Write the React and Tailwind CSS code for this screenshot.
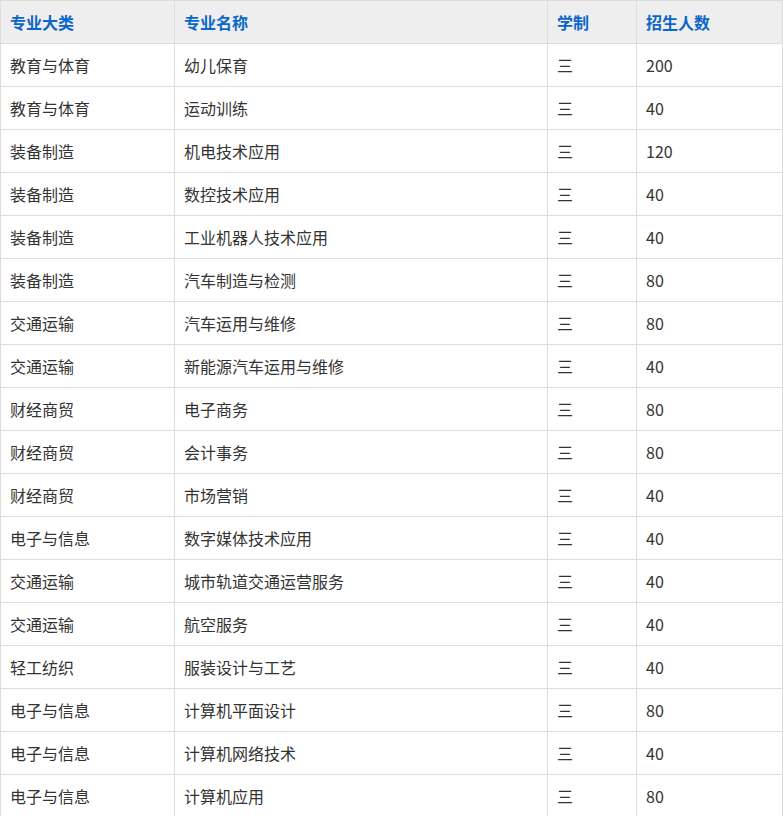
const rows = [
  ['教育与体育', '幼儿保育', '200'],
  ['教育与体育', '运动训练', '40'],
  ['装备制造', '机电技术应用', '120'],
  ['装备制造', '数控技术应用', '40'],
  ['装备制造', '工业机器人技术应用', '40'],
  ['装备制造', '汽车制造与检测', '80'],
  ['交通运输', '汽车运用与维修', '80'],
  ['交通运输', '新能源汽车运用与维修', '40'],
  ['财经商贸', '电子商务', '80'],
  ['财经商贸', '会计事务', '80'],
  ['财经商贸', '市场营销', '40'],
  ['电子与信息', '数字媒体技术应用', '40'],
  ['交通运输', '城市轨道交通运营服务', '40'],
  ['交通运输', '航空服务', '40'],
  ['轻工纺织', '服装设计与工艺', '40'],
  ['电子与信息', '计算机平面设计', '80'],
  ['电子与信息', '计算机网络技术', '40'],
  ['电子与信息', '计算机应用', '80'],
];

export default function App() {
  return (
    <div className="w-[783px] bg-white" style={{ fontFamily: '"Microsoft YaHei", "Noto Sans CJK SC", sans-serif' }}>
      <table className="w-full border-collapse text-[16px] text-[#333]">
        <colgroup>
          <col className="w-[174px]" />
          <col className="w-[373px]" />
          <col className="w-[89px]" />
          <col />
        </colgroup>
        <thead>
          <tr className="h-[43px] bg-[#eeeeee]">
            {['专业大类', '专业名称', '学制', '招生人数'].map((h) => (
              <th key={h} className="border border-[#dddddd] px-[9px] text-left font-bold text-[#0b66c9]">{h}</th>
            ))}
          </tr>
        </thead>
        <tbody>
          {rows.map((r, i) => (
            <tr key={i} className="h-[43px]">
              <td className="border border-[#dddddd] px-[9px]">{r[0]}</td>
              <td className="border border-[#dddddd] px-[9px]">{r[1]}</td>
              <td className="border border-[#dddddd] px-[9px]">三</td>
              <td className="border border-[#dddddd] px-[9px]">{r[2]}</td>
            </tr>
          ))}
        </tbody>
      </table>
    </div>
  );
}
